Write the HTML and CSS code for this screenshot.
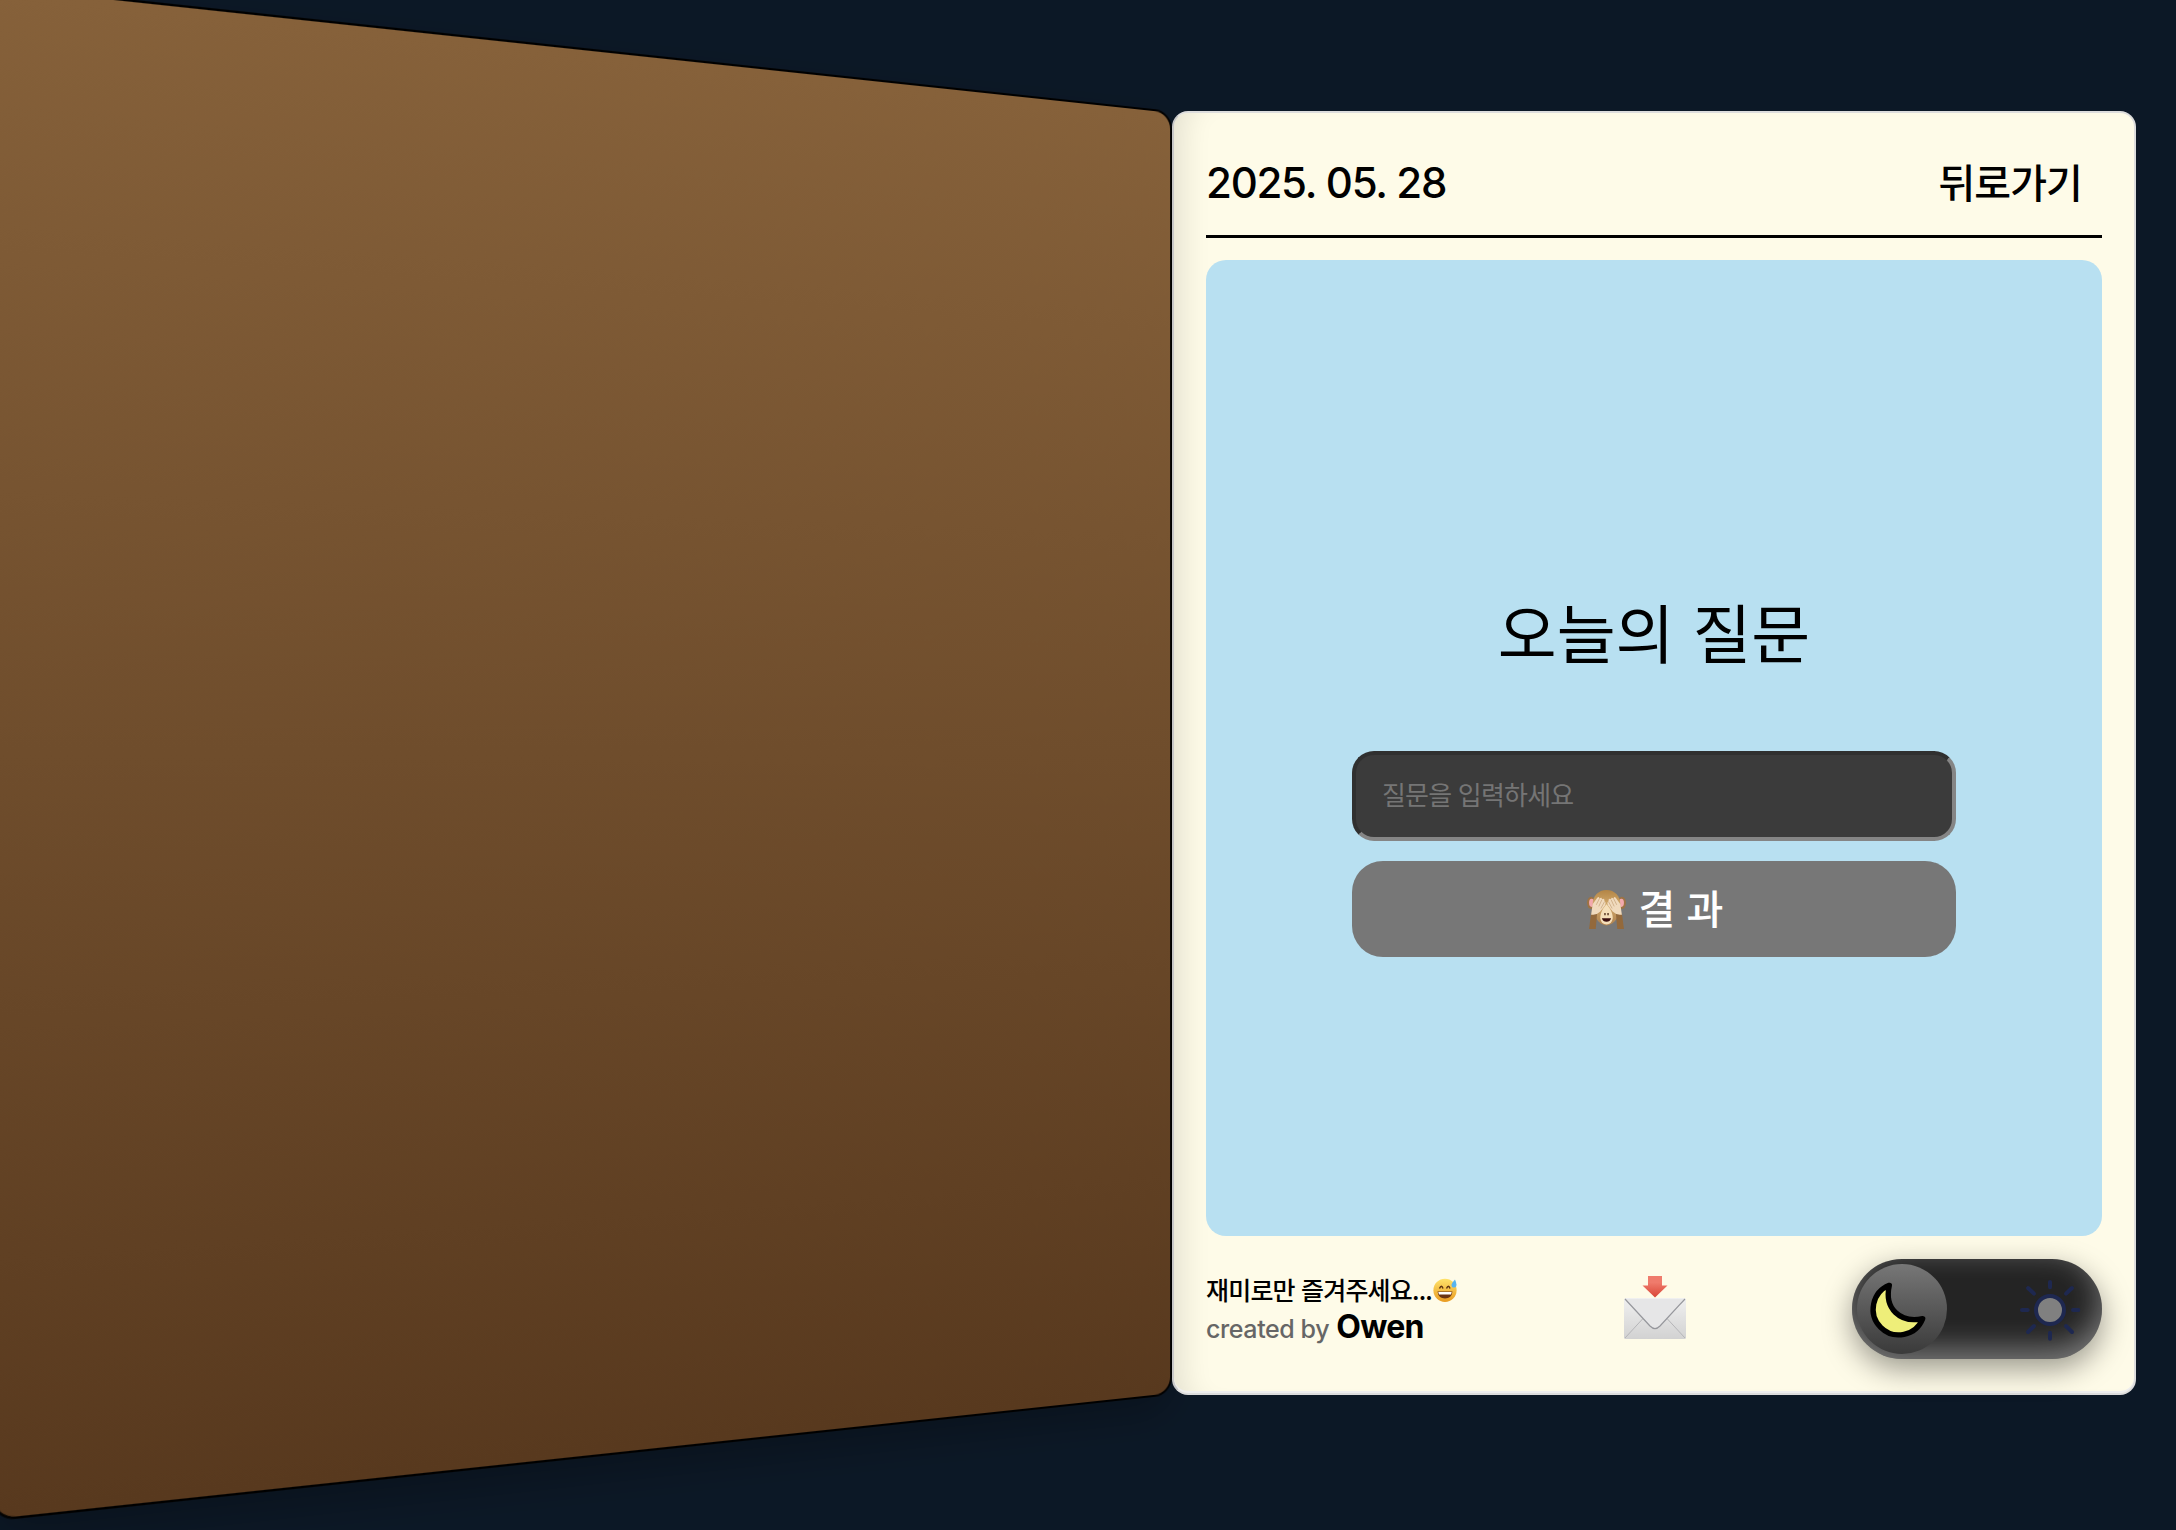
FILE: index.html
```html
<!DOCTYPE html>
<html lang="ko">
<head>
<meta charset="utf-8">
<title>오늘의 질문</title>
<link rel="stylesheet" href="styles.css">
</head>
<body>
<main class="book">
  <div class="cover-stage"><div class="cover"></div></div>
  <section class="page">
    <header class="page-header">
      <span class="date">2025. 05. 28</span>
      <span class="back">뒤로가기</span>
    </header>
    <div class="panel">
      <h1 class="title">오늘의 질문</h1>
      <input class="question" type="text" placeholder="질문을 입력하세요">
      <button class="submit" type="button">
        <svg class="monkey" viewBox="0 0 38 38" aria-hidden="true">
          <defs><linearGradient id="fur" x2="0" y2="1"><stop stop-color="#b38545"/><stop offset=".4" stop-color="#d0a76a"/><stop offset="1" stop-color="#b08350"/></linearGradient></defs>
          <ellipse cx="4" cy="12.500" rx="4" ry="6" fill="#9d7344"/><ellipse cx="34" cy="12.500" rx="4" ry="6" fill="#9d7344"/>
          <ellipse cx="4.500" cy="12.500" rx="2.500" ry="4" fill="#f3a9ae"/><ellipse cx="33.500" cy="12.500" rx="2.500" ry="4" fill="#f3a9ae"/>
          <path d="M19 0C11 0 5.500 6 5.500 14C5.500 25 11 34.500 19 34.500S32.500 25 32.500 14C32.500 6 27 0 19 0Z" fill="url(#fur)"/>
          <path d="M19 14C15 18 12.500 24 13 28Q14 33.500 19 33.500T25 28C25.500 24 23 18 19 14Z" fill="#f5dfba"/>
          <path d="M17.500 22.500v2M20.500 22.500v2" stroke="#4c2a18" stroke-width="1.300"/>
          <path d="M14.500 27.500H23.500Q22.500 31 19 31T14.500 27.500Z" fill="#3b1010"/>
          <path d="M2 38L4 23L10 21L8.500 38ZM36 38L34 23L28 21L29.500 38Z" fill="#93693c"/>
          <path d="M4 24L5.500 14L10 7.500Q12 6 12 8.500Q14.500 6.500 14.500 9Q17.500 7.500 17 11Q19 12 17.500 15L13 21Q9 25 4 24ZM34 24L32.500 14L28 7.500Q26 6 26 8.500Q23.500 6.500 23.500 9Q20.500 7.500 21 11Q19 12 20.500 15L25 21Q29 25 34 24Z" fill="#f0dabd"/>
          <path d="M9 14.500L12 8.500M11.500 16L14.500 9.500M13.500 18L17 11.500M29 14.500L26 8.500M26.500 16L23.500 9.500M24.500 18L21 11.500" stroke="#c6a27a" stroke-width=".7"/>
        </svg>
        <span class="submit-label">결 과</span>
      </button>
    </div>
    <footer class="page-footer">
      <div class="credit">
        <p class="note"><span class="note-text">재미로만 즐겨주세요...</span><svg class="smile" viewBox="0 0 24 24" aria-hidden="true">
          <defs><linearGradient id="face" x2="0" y2="1"><stop stop-color="#ffe36b"/><stop offset="1" stop-color="#e99b20"/></linearGradient></defs>
          <circle cx="12" cy="12.300" r="11.600" fill="url(#face)"/>
          <path d="M6.500 10.500Q8.500 6 10 10.500M13.500 10.500Q15.500 6 17 10.500" fill="none" stroke="#5d3212" stroke-width="1.500"/>
          <path d="M4.500 13.500H19.500Q18.500 20.500 12 20.500T4.500 13.500Z" fill="#6a3412"/><path d="M5.300 14H18.700L18 16.500H6Z" fill="#fff"/>
          <path d="M22 1.500Q25 8 22 9.500Q18.500 10 18.500 7Q18.500 5 22 1.500Z" fill="#58b4ef"/>
        </svg></p>
        <p class="author"><span class="by">created by</span><strong class="name">Owen</strong></p>
      </div>
      <svg class="mail" viewBox="0 0 62 63" aria-hidden="true">
        <defs><linearGradient id="paper" x2="0" y2="1"><stop stop-color="#f0f0f0"/><stop offset="1" stop-color="#d2d2d2"/></linearGradient>
        <linearGradient id="arrow" x2="0" y2="1"><stop offset=".3" stop-color="#ef7b6c"/><stop offset="1" stop-color="#d94536"/></linearGradient></defs>
        <rect y="22" width="62" height="41" rx="1.500" fill="url(#paper)"/>
        <path d="M1 62L19 42.500M61 62L43 42.500" stroke="#b5b5b8" fill="none"/>
        <path d="M1 23L26 50Q31 55 36 50L61 23" fill="#e6e6e7" stroke="#96979c" stroke-width="1.200"/>
        <path d="M24 0H38V9.500H43.500L31 21.500L18.500 9.500H24Z" fill="url(#arrow)"/>
      </svg>
      <div class="toggle">
        <span class="knob"></span>
        <svg class="toggle-icons" viewBox="96 87 750 300" aria-hidden="true">
          <path d="M208 166A77 77 0 1 0 308 266C240 280 192 236 208 166Z" fill="#eeee79" stroke="#000" stroke-width="16" stroke-linejoin="round"/>
          <g stroke="#1e2850" stroke-width="12" stroke-linecap="round">
            <circle cx="690" cy="240" r="42" fill="#808080"/>
            <path d="M690 156v16M690 308v18M606 240h17M759 240h16M624 174l18 17M756 174l-18 17M624 306l18-18M756 306l-18-18"/>
          </g>
        </svg>
      </div>
    </footer>
  </section>
</main>
</body>
</html>
```
FILE: styles.css
```css
* { box-sizing: border-box; }
body {
  margin: 0;
  height: 1530px;
  overflow: hidden;
  background: #0c1826;
  color: #000;
  font-family: Inter, "Noto Sans CJK KR", sans-serif;
}
.book { display: flex; align-items: flex-start; }
.cover-stage {
  display: flex;
  flex: none;
  justify-content: flex-end;
  align-items: flex-start;
  width: 1172px;
  height: 1530px;
  padding-top: 111px;
  perspective: 2181px;
  perspective-origin: 100% 753px;
}
/* The cover swings open towards the viewer around its right edge. */
.cover {
  flex: none;
  width: 1049px;
  height: 1284px;
  border: 2px solid #000;
  border-radius: 18px;
  background: linear-gradient(#86613a, #58391e);
  box-shadow: 0 16px 40px rgba(0, 0, 0, .25);
  transform: rotateY(20deg);
  transform-origin: 100% 50%;
}
.page {
  position: relative;
  display: flex;
  flex-direction: column;
  width: 964px;
  height: 1284px;
  margin-top: 111px;
  padding: 0 32px;
  border: 2px solid #ddd;
  border-left-color: #c8c8c8;
  border-radius: 16px;
  background: #fefbe8;
  box-shadow: inset 0 -2px 0 #eee, inset 30px 0 30px -22px rgba(0, 0, 0, .11);
}
.page-header {
  display: flex;
  justify-content: space-between;
  align-items: center;
  height: 125px;
  padding: 16px 20px 0 0;
  border-bottom: 3px solid #000;
  font-weight: 500;
  line-height: 56px;
}
.date { padding-top: 2px; font-size: 42px; letter-spacing: -1.250px; }
.back { padding-bottom: 2px; font-size: 40px; letter-spacing: -.9px; font-family: "Noto Sans CJK KR", sans-serif; }
.panel {
  display: flex;
  flex-direction: column;
  align-items: center;
  height: 976px;
  margin-top: 22px;
  padding-top: 320px;
  border-radius: 20px;
  background: #b8e0f1;
}
.title {
  margin: 0 0 71px;
  font: 400 64px/100px "Noto Sans CJK KR", sans-serif;
}
.question {
  width: 604px;
  height: 90px;
  padding: 0 26px 6px;
  border: 4px solid;
  border-color: #303030 #858585 #858585 #303030;
  border-radius: 22px;
  background: #3b3b3b;
  font: 400 26px "Noto Sans CJK KR", sans-serif;
  letter-spacing: -.8px;
}
.question::placeholder { color: #757575; opacity: 1; }
.submit {
  display: flex;
  justify-content: center;
  align-items: center;
  gap: 13px;
  width: 604px;
  height: 96px;
  margin-top: 20px;
  padding: 0 0 0 2px;
  border: 0;
  border-radius: 31px;
  background: #777;
  color: #fff;
  font: 500 40px/60px "Noto Sans CJK KR", sans-serif;
}
.monkey { width: 39px; height: 39px; }
.submit-label { padding-bottom: 5px; }
.page-footer {
  display: grid;
  grid-template-columns: 1fr auto 1fr;
  align-items: center;
  height: 100px;
  margin-top: 23px;
}
.credit p { display: flex; align-items: center; margin: 0; }
.note { height: 36px; gap: 1px; font: 500 25px/36px "Noto Sans CJK KR", sans-serif; letter-spacing: -.8px; }
.note-text { padding-bottom: 3px; }
.smile { width: 24px; height: 24px; }
.credit .author { height: 38px; gap: 7px; align-items: baseline; line-height: 38px; }
.by { color: #666; font-size: 25px; font-weight: 500; letter-spacing: -.4px; }
.name { font-size: 32px; font-weight: 700; letter-spacing: -.7px; }
.mail { width: 62px; height: 63px; margin: -4px -1px 0 1px; }
.toggle {
  position: relative;
  justify-self: end;
  width: 250px;
  height: 100px;
  border-radius: 50px;
  background: #242424;
  box-shadow: inset 0 -10px 30px rgba(255, 255, 255, .4), 0 10px 30px rgba(0, 0, 0, .4);
}
.knob {
  position: absolute;
  top: 5px;
  left: 5px;
  width: 90px;
  height: 90px;
  border-radius: 50%;
  background: linear-gradient(#777, #3a3a3a);
}
.toggle-icons { position: absolute; inset: 0; width: 250px; height: 100px; }
```
